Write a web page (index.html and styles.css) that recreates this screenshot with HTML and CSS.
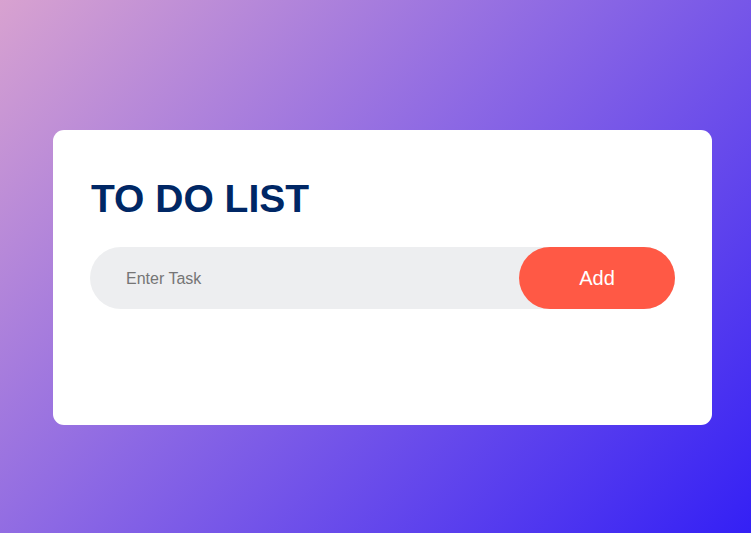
FILE: index.html
```html
<!DOCTYPE html>
<html lang="en">
<head>
<meta charset="utf-8">
<title>To Do List</title>
<link rel="stylesheet" href="styles.css">
</head>
<body>
<div class="page">
  <div class="card">
    <h2 class="title">TO DO LIST</h2>
    <div class="row">
      <input class="task-input" type="text" placeholder="Enter Task">
      <button class="add-btn" type="button">Add</button>
    </div>
  </div>
</div>
</body>
</html>
```
FILE: styles.css
```css
* { box-sizing: border-box; margin: 0; padding: 0; }
html, body { height: 100%; }
body {
  font-family: "Liberation Sans", Arial, sans-serif;
  background: linear-gradient(135deg, #d8a2d0 0%, #8c68e4 45%, #3420f5 100%);
  overflow: hidden;
}
.page {
  height: 100%;
  padding: 130px 39px 0 53px;
}
.card {
  width: 659px;
  height: 295px;
  background: #fff;
  border-radius: 11px;
  padding: 45px 37px 0 37px;
}
.title {
  color: #002765;
  font-size: 39px;
  font-weight: 700;
  line-height: 47px;
  padding-left: 1px;
  margin-bottom: 25px;
}
.row {
  display: flex;
  align-items: center;
  height: 62px;
  background: #edeef0;
  border-radius: 31px;
  padding-left: 26px;
}
.task-input {
  flex: 1;
  border: none;
  outline: none;
  background: transparent;
  padding: 12px 10px 10px 10px;
  font-family: "Liberation Sans", Arial, sans-serif;
  font-size: 16px;
  color: #333;
}
.task-input::placeholder { color: #757575; }
.add-btn {
  width: 156px;
  height: 62px;
  border: none;
  outline: none;
  background: #ff5945;
  color: #fff;
  font-family: "Liberation Sans", Arial, sans-serif;
  font-size: 20px;
  border-radius: 31px;
  cursor: pointer;
}
```
